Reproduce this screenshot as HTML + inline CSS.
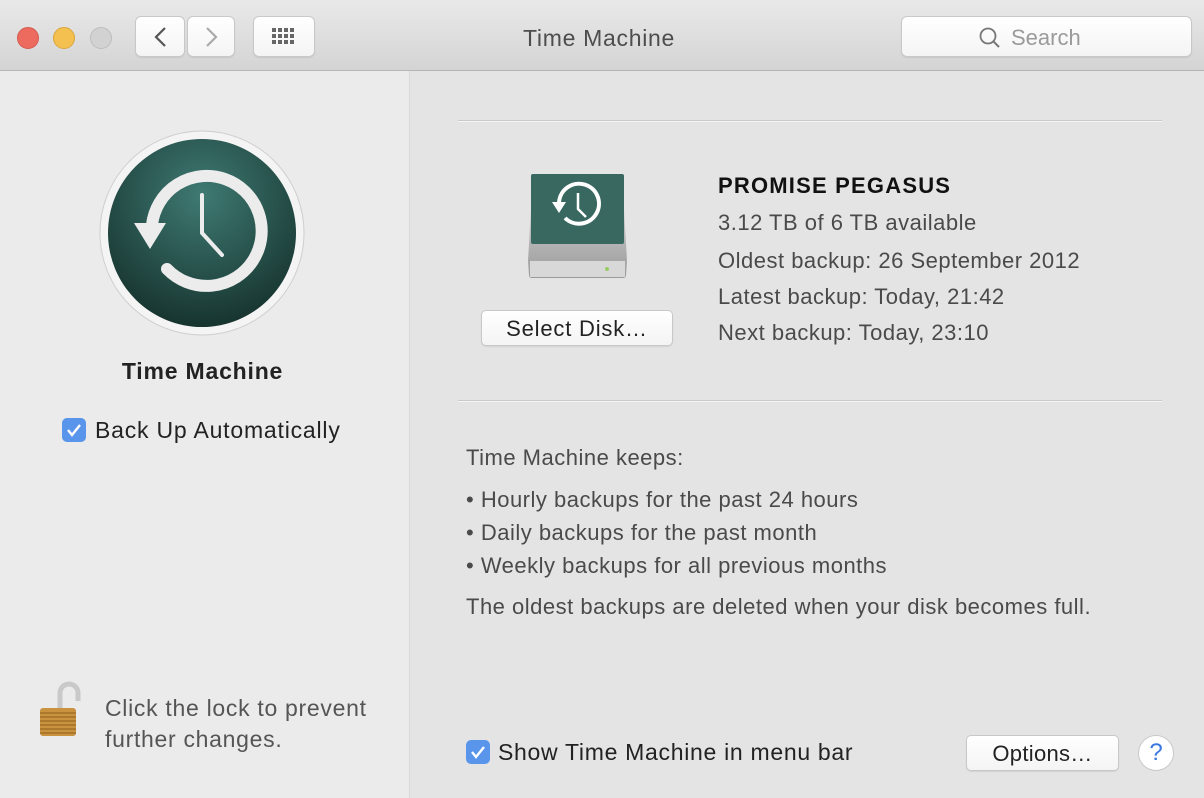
<!DOCTYPE html>
<html><head><meta charset="utf-8"><style>
*{margin:0;padding:0;box-sizing:border-box}
body{width:1204px;height:798px;overflow:hidden;font-family:"Liberation Sans",sans-serif;background:#e4e4e4;position:relative;color:#1e1e1e}
.a{position:absolute;white-space:nowrap}
#tb{position:absolute;left:0;top:0;width:1204px;height:71px;background:linear-gradient(#e9e9e9,#d4d4d4);border-bottom:1px solid #b5b5b5}
.dot{position:absolute;top:27px;width:22px;height:22px;border-radius:50%}
.btn{position:absolute;background:linear-gradient(#fff,#f4f4f4);border:1px solid #c8c8c8;border-radius:6px;box-shadow:0 1px 1px rgba(0,0,0,.08)}
#side{position:absolute;left:0;top:71px;width:410px;height:727px;background:#ebebeb;border-right:1px solid #d9d9d9}
.t{font-size:22px;letter-spacing:0.5px;color:#4a4a4a}
.hr{position:absolute;left:458px;width:704px;height:2px;background:#c9c9c9;border-bottom:1px solid #f5f5f5}
.cb{position:absolute;width:24px;height:24px;border-radius:5px;background:#5a95ec}
</style></head><body>
<div id="tb">
<div class="dot" style="left:17px;background:#ec6a5e;border:1px solid #d35a4f"></div>
<div class="dot" style="left:53px;background:#f4c04f;border:1px solid #d9a53b"></div>
<div class="dot" style="left:90px;background:#d2d2d2;border:1px solid #bdbdbd"></div>
<div class="btn" style="left:135px;top:16px;width:50px;height:41px"><svg width="50" height="40"><path d="M29 11 L20 20 L29 29" stroke="#555" stroke-width="2.2" fill="none"/></svg></div>
<div class="btn" style="left:187px;top:16px;width:48px;height:41px"><svg width="48" height="40"><path d="M19 11 L28 20 L19 29" stroke="#aaa" stroke-width="2.2" fill="none"/></svg></div>
<div class="btn" style="left:253px;top:16px;width:62px;height:41px"><svg width="62" height="40"><g fill="#666"><rect x="18" y="11" width="4" height="4"/><rect x="24" y="11" width="4" height="4"/><rect x="30" y="11" width="4" height="4"/><rect x="36" y="11" width="4" height="4"/><rect x="18" y="17" width="4" height="4"/><rect x="24" y="17" width="4" height="4"/><rect x="30" y="17" width="4" height="4"/><rect x="36" y="17" width="4" height="4"/><rect x="18" y="23" width="4" height="4"/><rect x="24" y="23" width="4" height="4"/><rect x="30" y="23" width="4" height="4"/><rect x="36" y="23" width="4" height="4"/></g></svg></div>
<div class="a" style="left:0;width:1198px;text-align:center;top:25px;font-size:23px;letter-spacing:0.7px;color:#4d4d4d">Time Machine</div>
<div class="btn" style="left:901px;top:16px;width:291px;height:41px"><svg style="position:absolute;left:76px;top:9px" width="24" height="24"><circle cx="10" cy="10" r="7.5" stroke="#777" stroke-width="1.8" fill="none"/><path d="M15.5 15.5 L21 21" stroke="#777" stroke-width="2"/></svg><span class="a" style="left:109px;top:8px;font-size:22px;color:#9a9a9a">Search</span></div>
</div>
<div id="side">
<svg style="position:absolute;left:98px;top:58px" width="208" height="208">
<defs><radialGradient id="g" cx="50%" cy="30%" r="70%"><stop offset="0" stop-color="#3f7a73"/><stop offset="1" stop-color="#17342f"/></radialGradient></defs>
<circle cx="104" cy="104" r="102" fill="#f4f4f4" stroke="#cfcfcf"/>
<circle cx="104" cy="104" r="94" fill="url(#g)"/>
<path d="M69 140 A55 55 0 1 0 54 96" stroke="#ececec" stroke-width="12" fill="none" stroke-linecap="round"/>
<path d="M36 94 L68 94 L52 120 Z" fill="#ececec"/>
<path d="M104 66 L104 104 L124 126" stroke="#ececec" stroke-width="4" fill="none" stroke-linecap="round"/>
</svg>
<div class="a" style="left:0;width:405px;text-align:center;top:287px;font-size:23px;letter-spacing:0.8px;font-weight:bold;color:#222">Time Machine</div>
<div class="cb" style="left:62px;top:347px"><svg width="24" height="24"><path d="M6 12 L10 17 L18 7" stroke="#fff" stroke-width="2.4" fill="none"/></svg></div>
<div class="a" style="left:95px;top:346px;font-size:23px;letter-spacing:0.8px;color:#222">Back Up Automatically</div>
<svg style="position:absolute;left:38px;top:606px" width="48" height="60">
<path d="M22 34 L22 16 A9 9 0 0 1 40 16 L40 24" stroke="#c9c9c9" stroke-width="5" fill="none"/>
<rect x="2" y="31" width="36" height="28" rx="3" fill="#c8923f"/>
<g stroke="#9a6a25" stroke-width="1.2"><path d="M2 36H38M2 40H38M2 44H38M2 48H38M2 52H38M2 56H38"/></g>
</svg>
<div class="a t" style="left:105px;top:622px;font-size:23px;letter-spacing:0.7px;line-height:31px;color:#555">Click the lock to prevent<br>further changes.</div>
</div>
<div class="hr" style="top:120px"></div>
<div class="hr" style="top:400px"></div>
<svg style="position:absolute;left:527px;top:171px" width="101" height="109">
<defs><linearGradient id="s" x1="0" y1="0" x2="0" y2="1"><stop offset="0" stop-color="#e6e6e6"/><stop offset="1" stop-color="#9a9a9a"/></linearGradient></defs>
<path d="M6 2 H95 L100 90 L99 104 Q99 107 96 107 H5 Q2 107 2 104 L1 90 Z" fill="url(#s)"/>
<rect x="4" y="3" width="93" height="70" rx="2" fill="#386860"/>
<rect x="3" y="90" width="95" height="16" fill="#d8d8d8"/>
<circle cx="80" cy="98" r="2" fill="#9c6"/>
<path d="M38 47 A20 20 0 1 0 32 32" stroke="#fff" stroke-width="4" fill="none"/>
<path d="M25 31 L39 31 L32 42 Z" fill="#fff"/>
<path d="M51 22 L51 38 L59 46" stroke="#fff" stroke-width="2.5" fill="none"/>
</svg>
<div class="btn" style="left:481px;top:310px;width:192px;height:36px;border-radius:5px"><span class="a" style="left:0;width:190px;text-align:center;top:5px;font-size:22px;letter-spacing:0.8px;color:#222">Select Disk…</span></div>
<div class="a" style="left:718px;top:173px;font-size:22px;letter-spacing:1.2px;font-weight:bold;color:#111">PROMISE PEGASUS</div>
<div class="a t" style="left:718px;top:210px">3.12 TB of 6 TB available</div>
<div class="a t" style="left:718px;top:248px">Oldest backup: 26 September 2012</div>
<div class="a t" style="left:718px;top:284px">Latest backup: Today, 21:42</div>
<div class="a t" style="left:718px;top:320px">Next backup: Today, 23:10</div>
<div class="a t" style="left:466px;top:445px">Time Machine keeps:</div>
<div class="a t" style="left:466px;top:487px">• Hourly backups for the past 24 hours</div>
<div class="a t" style="left:466px;top:520px">• Daily backups for the past month</div>
<div class="a t" style="left:466px;top:553px">• Weekly backups for all previous months</div>
<div class="a t" style="left:466px;top:594px">The oldest backups are deleted when your disk becomes full.</div>
<div class="cb" style="left:466px;top:740px"><svg width="24" height="24"><path d="M6 12 L10 17 L18 7" stroke="#fff" stroke-width="2.4" fill="none"/></svg></div>
<div class="a" style="left:498px;top:739px;font-size:23px;letter-spacing:0.7px;color:#222">Show Time Machine in menu bar</div>
<div class="btn" style="left:966px;top:735px;width:153px;height:36px;border-radius:5px"><span class="a" style="left:0;width:151px;text-align:center;top:5px;font-size:22px;letter-spacing:0.3px;color:#222">Options…</span></div>
<div style="position:absolute;left:1138px;top:735px;width:36px;height:36px;border-radius:50%;background:#fff;border:1px solid #c8c8c8;text-align:center;font-size:24px;line-height:34px;color:#3a78e0">?</div>
</body></html>
